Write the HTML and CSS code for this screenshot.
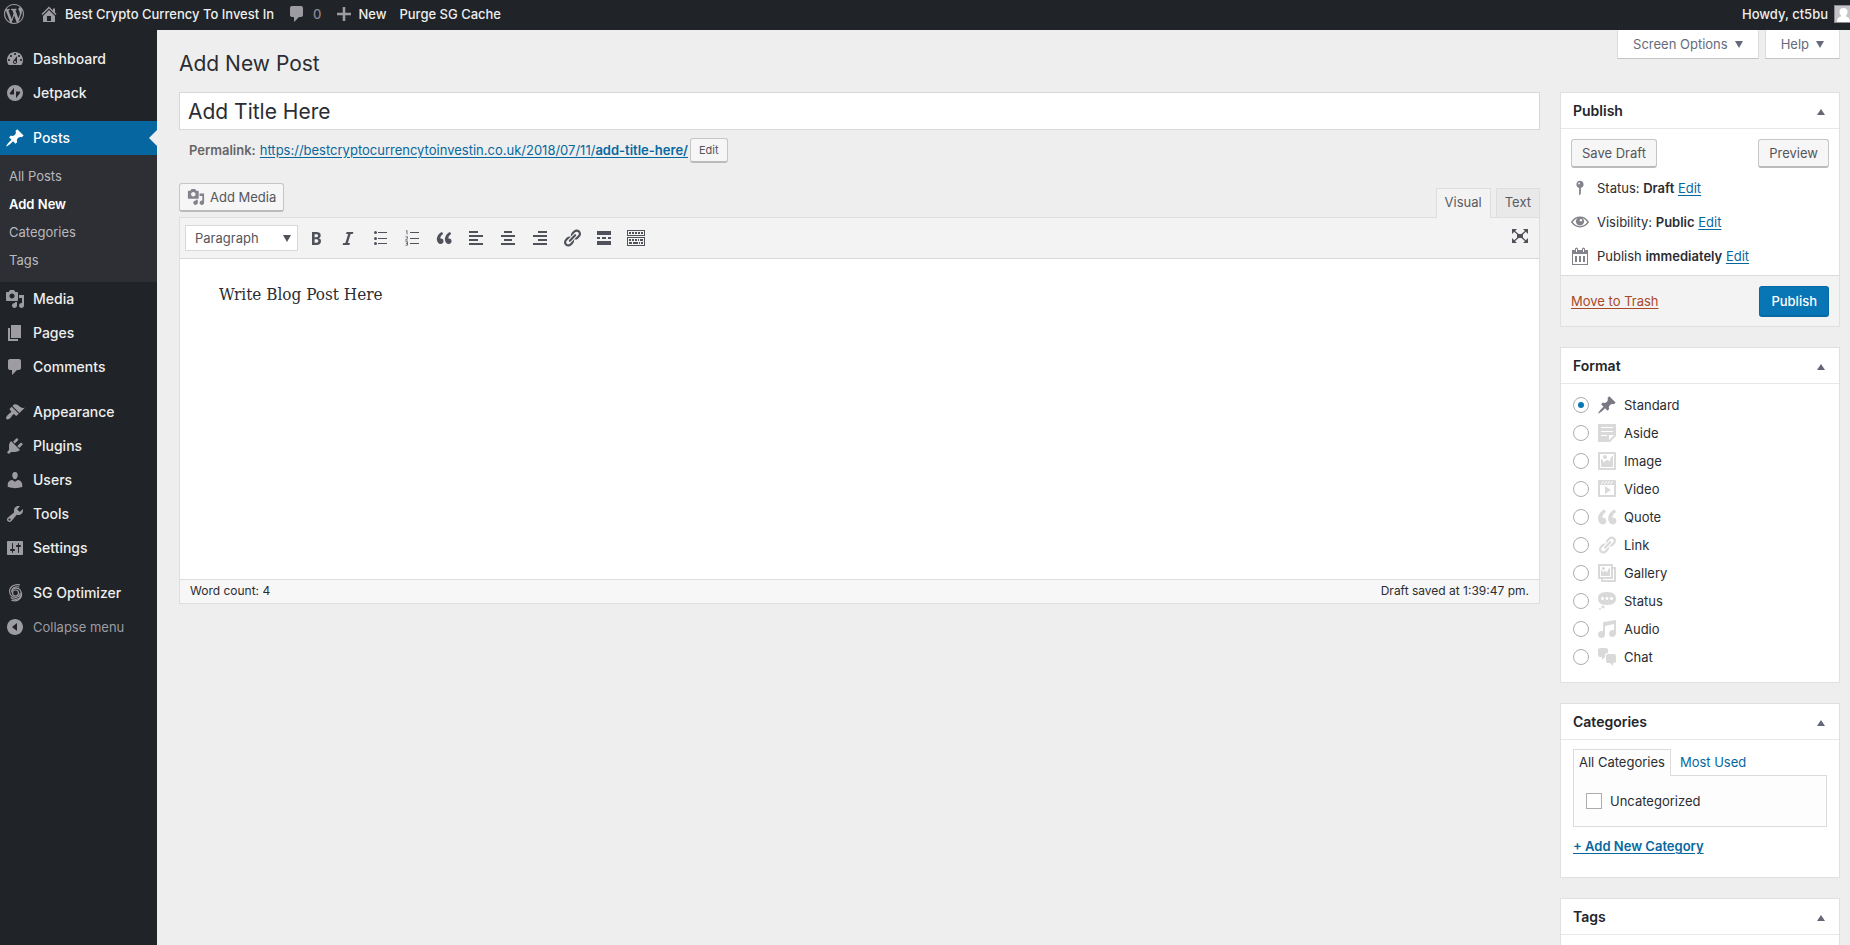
FILE: index.html
```html
<!DOCTYPE html>
<html lang="en">
<head>
<meta charset="utf-8">
<title>Add New Post</title>
<link rel="stylesheet" href="styles.css">
</head>
<body>
<svg class="sprite" aria-hidden="true">
<symbol id="i-wp" viewBox="0 0 20 20"><path d="M20 10c0-5.51-4.49-10-10-10C4.48 0 0 4.49 0 10c0 5.52 4.48 10 10 10 5.51 0 10-4.48 10-10zM7.78 15.37L4.37 6.22c.55-.02 1.17-.08 1.17-.08.5-.06.44-1.13-.06-1.11 0 0-1.45.11-2.37.11-.18 0-.37 0-.58-.01C4.12 2.69 6.87 1.11 10 1.11c2.33 0 4.45.87 6.05 2.34-.68-.11-1.65.39-1.65 1.58 0 .74.45 1.36.9 2.1.35.61.55 1.36.55 2.46 0 1.49-1.4 5-1.4 5l-3.03-8.37c.54-.02.82-.17.82-.17.5-.05.44-1.25-.06-1.22 0 0-1.44.12-2.38.12-.87 0-2.33-.12-2.33-.12-.5-.03-.56 1.2-.06 1.22l.92.08 1.26 3.41zM17.41 10c.24-.64.74-1.87.43-4.25.7 1.29 1.05 2.71 1.05 4.25 0 3.29-1.73 6.24-4.4 7.78.97-2.59 1.94-5.2 2.92-7.78zM6.1 18.09C3.12 16.65 1.11 13.53 1.11 10c0-1.3.23-2.48.72-3.59C3.25 10.3 4.67 14.2 6.1 18.09zm4.03-6.63l2.58 6.98c-.86.29-1.76.45-2.71.45-.79 0-1.57-.11-2.29-.33.81-2.38 1.62-4.74 2.42-7.1z"/></symbol>
<symbol id="i-home" viewBox="0 0 20 20"><path fill-rule="evenodd" d="M16 8.5l1.53 1.53-1.06 1.06L10 4.6l-6.47 6.49-1.06-1.06L10 2.5l4 4v-2h2v4zm-6-2.46l6 5.99V18H4v-5.97zM12 17v-5H8v5h4z"/></symbol>
<symbol id="i-plus" viewBox="0 0 20 20"><path d="M17 8.7v2.6h-5.7V17H8.7v-5.7H3V8.7h5.7V3h2.6v5.7z"/></symbol>
<symbol id="i-dash" viewBox="0 0 20 20"><path fill-rule="evenodd" d="M3.76 16h12.48c1.1-1.37 1.76-3.11 1.76-5 0-4.42-3.58-8-8-8s-8 3.58-8 8c0 1.89.66 3.63 1.76 5zM10 4c.55 0 1 .45 1 1s-.45 1-1 1-1-.45-1-1 .45-1 1-1zM6 6c.55 0 1 .45 1 1s-.45 1-1 1-1-.45-1-1 .45-1 1-1zm8 0c.55 0 1 .45 1 1s-.45 1-1 1-1-.45-1-1 .45-1 1-1zm-5.37 5.55L12 7v6c0 1.1-.9 2-2 2s-2-.9-2-2c0-.57.24-1.08.63-1.45zM4 10c.55 0 1 .45 1 1s-.45 1-1 1-1-.45-1-1 .45-1 1-1zm12 0c.55 0 1 .45 1 1s-.45 1-1 1-1-.45-1-1 .45-1 1-1zm-5 3c0-.55-.45-1-1-1s-1 .45-1 1 .45 1 1 1 1-.45 1-1z"/></symbol>
<symbol id="i-jet" viewBox="0 0 20 20"><path fill-rule="evenodd" d="M10 2a8 8 0 1 0 0 16 8 8 0 0 0 0-16zM9 11.6H5.6c-.9-.3-1-1-.7-1.500L9 4.800zM11 15.200V8.400h3.400c.9.3 1 1 .7 1.500z"/></symbol>
<symbol id="i-pin" viewBox="0 0 20 20"><path d="M10.44 3.02l1.82-1.82 6.36 6.35-1.83 1.82c-1.05-.68-2.48-.57-3.41.36l-.75.75c-.92.93-1.04 2.35-.35 3.41l-1.83 1.82-2.41-2.41-2.8 2.79c-.42.42-3.38 2.71-3.8 2.29s1.86-3.39 2.28-3.81l2.79-2.79L4.1 9.36l1.83-1.82c1.05.69 2.48.57 3.4-.36l.75-.75c.93-.92 1.05-2.35.36-3.41z"/></symbol>
<symbol id="i-media" viewBox="0 0 20 20"><path fill-rule="evenodd" d="M13 11V4c0-.55-.45-1-1-1h-1.670L9 1H5L3.670 3H2c-.55 0-1 .45-1 1v7c0 .55.45 1 1 1h10c.55 0 1-.45 1-1zM7 4.500c1.380 0 2.500 1.120 2.500 2.500S8.380 9.500 7 9.500 4.500 8.380 4.500 7 5.620 4.500 7 4.500zM14 6h5v10.500c0 1.380-1.120 2.500-2.500 2.500S14 17.880 14 16.500s1.120-2.500 2.500-2.500c.17 0 .34.02.5.05V9h-3V6zm-4 8.050V13h2v3.500c0 1.380-1.120 2.500-2.500 2.500S7 17.880 7 16.500 8.120 14 9.500 14c.17 0 .34.02.5.05z"/></symbol>
<symbol id="i-page" viewBox="0 0 20 20"><path d="M6 15V2h10v13H6zm-1 1h8v2H3V5h2v11z"/></symbol>
<symbol id="i-comment" viewBox="0 0 20 20"><path d="M5 2h9c1.100 0 2 .9 2 2v7c0 1.100-.9 2-2 2h-2l-5 5v-5H5c-1.100 0-2-.9-2-2V4c0-1.100.9-2 2-2z"/></symbol>
<symbol id="i-brush" viewBox="0 0 20 20"><path d="M14.480 11.060L7.410 3.990l1.500-1.500c.5-.56 2.300-.47 3.510.32 1.210.8 1.430 1.280 2.910 2.100 1.180.64 2.450 1.260 4.450.85zm-.71.71L6.700 4.700 4.930 6.470c-.39.39-.39 1.020 0 1.410l1.060 1.060c.39.39.39 1.030 0 1.420-.6.6-1.430 1.110-2.210 1.690-.35.26-.7.53-1.010.84C1.430 14.230.4 16.080 1.400 17.070c.99 1 2.840-.03 4.180-1.360.31-.31.58-.66.85-1.020.57-.78 1.080-1.610 1.690-2.210.39-.39 1.020-.39 1.410 0l1.060 1.060c.39.39 1.020.39 1.410 0z"/></symbol>
<symbol id="i-plug" viewBox="0 0 20 20"><path d="M13.110 4.360L9.870 7.600 8 5.730l3.240-3.240c.35-.34 1.050-.2 1.560.32.52.51.66 1.210.31 1.550zm-8 1.770l.91-1.120 9.010 9.010-1.190.84c-.71.71-2.630 1.160-3.820 1.160H6.140L4.900 17.260c-.59.59-1.540.59-2.120 0-.59-.58-.59-1.530 0-2.120l1.240-1.240v-3.880c0-1.130.4-3.190 1.090-3.890zm7.260 3.970l3.240-3.240c.34-.35 1.040-.21 1.550.31.52.51.66 1.210.31 1.550l-3.240 3.250z"/></symbol>
<symbol id="i-user" viewBox="0 0 20 20"><path d="M10 9.250c-2.270 0-2.730-3.440-2.730-3.440C7 4.020 7.820 2 9.970 2c2.160 0 2.980 2.020 2.710 3.810 0 0-.41 3.440-2.680 3.440zm0 2.570L12.720 10c2.390 0 4.520 2.330 4.520 4.530v2.490s-3.650 1.130-7.240 1.130c-3.650 0-7.240-1.130-7.240-1.130v-2.490c0-2.250 1.940-4.480 4.470-4.480z"/></symbol>
<symbol id="i-tool" viewBox="0 0 20 20"><path fill-rule="evenodd" d="M16.680 9.770c-1.340 1.340-3.300 1.670-4.950.99l-5.410 6.520c-.99.99-2.590.99-3.580 0s-.99-2.590 0-3.570l6.520-5.420c-.68-1.650-.35-3.610.99-4.950 1.280-1.280 3.120-1.620 4.720-1.060l-2.890 2.890 2.820 2.820 2.860-2.870c.53 1.580.18 3.390-1.080 4.650zM3.810 16.210c.4.39 1.040.39 1.430 0 .4-.4.4-1.040 0-1.430-.39-.4-1.030-.4-1.430 0-.39.39-.39 1.030 0 1.430z"/></symbol>
<symbol id="i-set" viewBox="0 0 20 20"><path fill-rule="evenodd" d="M18 16V4c0-.55-.45-1-1-1H3c-.55 0-1 .45-1 1v12c0 .55.45 1 1 1h14c.55 0 1-.45 1-1zM8 11h1c.55 0 1 .45 1 1s-.45 1-1 1H8v1.500c0 .28-.22.5-.5.5s-.5-.22-.5-.5V13H6c-.55 0-1-.45-1-1s.45-1 1-1h1V5.500c0-.28.22-.5.5-.5s.5.22.5.5V11zm5-2h-1c-.55 0-1-.45-1-1s.45-1 1-1h1V5.500c0-.28.22-.5.5-.5s.5.22.5.5V7h1c.55 0 1 .45 1 1s-.45 1-1 1h-1v5.500c0 .28-.22.5-.5.5s-.5-.22-.5-.5V9z"/></symbol>
<symbol id="i-sg" viewBox="0 0 20 20"><g fill="none" stroke="currentColor" stroke-width="1.200" stroke-linecap="round"><circle cx="10.500" cy="10" r="3"/><path d="M14.500 1.800C9 .8 4.500 4 4.600 8.500c.1 3.500 2.600 6 6 5.900 3-.1 4.600-2 4.700-4.400"/><path d="M13.800 4C9.500 2.900 6.700 5.500 6.700 9"/><path d="M6.800 7.300c2-3 6.500-2.800 8.400-.3 2.500 3.500.8 8.500-3.400 9.200-2.300.4-4.300-.2-5.800-1.400"/><path d="M16.600 11.500c-.2 4.500-4.600 7.500-9.800 5.800"/></g></symbol>
<symbol id="i-collapse" viewBox="0 0 20 20"><path fill-rule="evenodd" d="M10 2c4.420 0 8 3.580 8 8s-3.580 8-8 8-8-3.580-8-8 3.580-8 8-8zm2 12V6l-5 4z"/></symbol>
<symbol id="i-aside" viewBox="0 0 20 20"><path fill-rule="evenodd" d="M1 1h18v12l-6 6H1V1zm3 3v1h12V4H4zm0 4v1h12V8H4zm6 5v-1H4v1h6zm2 4l5-5h-5v5z"/></symbol>
<symbol id="i-image" viewBox="0 0 20 20"><path fill-rule="evenodd" d="M2.250 1h15.500c.69 0 1.250.56 1.250 1.250v15.500c0 .69-.56 1.250-1.250 1.250H2.250C1.560 19 1 18.440 1 17.750V2.250C1 1.560 1.560 1 2.250 1zM17 17V3H3v14h14zM10 6c0-1.100-.9-2-2-2s-2 .9-2 2 .9 2 2 2 2-.9 2-2zm3 5s0-6 3-6v10c0 .55-.45 1-1 1H5c-.55 0-1-.45-1-1V8c2 0 3 4 3 4s1-3 3-3 3 2 3 2z"/></symbol>
<symbol id="i-video" viewBox="0 0 20 20"><path fill-rule="evenodd" d="M2 1h16c.55 0 1 .45 1 1v16H1V2c0-.55.45-1 1-1zm4 1L4 5h1l2-3H6zm3 0L7 5h1l2-3H9zm3 0l-2 3h1l2-3h-1zm3 0l-2 3h1l2-3h-1zm2 14V6H3v10h14zM8 7l6 4-6 4V7z"/></symbol>
<symbol id="i-quote" viewBox="0 0 20 20"><path d="M9.490 13.220c0-.74-.2-1.380-.61-1.900-.62-.78-1.830-.88-2.530-.72-.29-1.650 1.110-3.750 2.920-4.650L7.880 4c-2.730 1.300-5.420 4.280-4.960 8.050C3.210 14.430 4.590 16 6.540 16c.85 0 1.560-.25 2.120-.75s.83-1.180.83-2.030zm8.050 0c0-.74-.2-1.380-.61-1.900-.63-.78-1.830-.88-2.530-.72-.29-1.650 1.110-3.750 2.920-4.650L15.930 4c-2.730 1.300-5.410 4.280-4.950 8.050.29 2.380 1.660 3.950 3.610 3.950.85 0 1.560-.25 2.120-.75s.83-1.180.83-2.030z"/></symbol>
<symbol id="i-bigquote" viewBox="2 3 16 14"><use href="#i-quote" width="20" height="20"/></symbol>
<symbol id="i-link" viewBox="0 0 20 20"><path fill-rule="evenodd" d="M17.740 2.760c1.680 1.690 1.680 4.410 0 6.100l-1.530 1.520c-1.120 1.120-2.700 1.470-4.140 1.090l2.620-2.610.76-.77.76-.76c.84-.84.84-2.200 0-3.040-.84-.85-2.200-.85-3.040 0l-.77.76-3.380 3.380c-.37-1.440-.02-3.020 1.100-4.140l1.520-1.530c1.690-1.680 4.420-1.680 6.100 0zM8.590 13.430l5.340-5.340c.42-.42.42-1.100 0-1.520-.44-.43-1.130-.39-1.530 0l-5.330 5.340c-.42.42-.42 1.100 0 1.520.44.43 1.130.39 1.520 0zm-.76 2.290l4.140-4.150c.38 1.440.03 3.020-1.090 4.140l-1.520 1.530c-1.690 1.680-4.410 1.680-6.100 0-1.680-1.680-1.680-4.420 0-6.100l1.530-1.520c1.120-1.120 2.700-1.470 4.140-1.100l-4.140 4.150c-.85.84-.85 2.200 0 3.050.84.84 2.200.84 3.040 0z"/></symbol>
<symbol id="i-gallery" viewBox="0 0 20 20"><path fill-rule="evenodd" d="M16 4h1.960c.57 0 1.040.47 1.040 1.040v12.920c0 .57-.47 1.040-1.040 1.040H5.040C4.470 19 4 18.530 4 17.960V16H2.040C1.470 16 1 15.530 1 14.960V2.040C1 1.470 1.470 1 2.040 1h12.920c.57 0 1.040.47 1.040 1.040V4zM3 14h11V3H3v11zm5-8.500C8 4.670 7.330 4 6.500 4S5 4.670 5 5.500 5.670 7 6.500 7 8 6.330 8 5.500zm2 4.500s1-5 3-5v8H4V7c2 0 2 3 2 3s.33-2 2-2 2 2 2 2zm7 7V6h-1v8.960c0 .57-.47 1.040-1.040 1.040H6v1h11z"/></symbol>
<symbol id="i-status" viewBox="0 0 20 20"><path fill-rule="evenodd" d="M10 1c7 0 9 2.910 9 6.500S17 14 10 14s-9-2.910-9-6.500S3 1 10 1zM5.500 9C6.330 9 7 8.330 7 7.500S6.330 6 5.500 6 4 6.670 4 7.500 4.670 9 5.500 9zM10 9c.83 0 1.500-.67 1.500-1.500S10.830 6 10 6s-1.500.67-1.500 1.500S9.170 9 10 9zm4.500 0c.83 0 1.500-.67 1.500-1.500S15.330 6 14.500 6 13 6.670 13 7.500 13.670 9 14.500 9z"/><circle cx="6" cy="16" r="1.500"/><circle cx="3" cy="18" r="1"/></symbol>
<symbol id="i-audio" viewBox="0 0 20 20"><path d="M6.990 3.080l11.020-2c.55-.08.99.45.99 1V14.500c0 1.940-1.570 3.500-3.500 3.500S12 16.440 12 14.500c0-1.930 1.570-3.500 3.500-3.500.54 0 1.040.14 1.500.35V5.080l-9 2V16c-.24 1.700-1.740 3-3.500 3C2.570 19 1 17.440 1 15.500 1 13.570 2.570 12 4.500 12c.54 0 1.040.14 1.500.35V4.080c0-.55.44-.91.99-1z"/></symbol>
<symbol id="i-chat" viewBox="0 0 20 20"><path d="M11 6h-.82C9.070 6 8 7.200 8 8.160V10l-3 3v-3H3c-1.100 0-2-.9-2-2V3c0-1.100.9-2 2-2h6c1.100 0 2 .9 2 2v3zm0 1h6c1.100 0 2 .9 2 2v5c0 1.100-.9 2-2 2h-1v3l-3-3h-2c-1.100 0-2-.9-2-2V9c0-1.100.9-2 2-2z"/></symbol>
<symbol id="i-poststatus" viewBox="0 0 20 20"><path fill-rule="evenodd" d="M14 6c0 1.860-1.280 3.410-3 3.860V16c0 1-2 2-2 2V9.860c-1.720-.45-3-2-3-3.860 0-2.210 1.790-4 4-4s4 1.790 4 4zM8 5c0 .55.45 1 1 1s1-.45 1-1-.45-1-1-1-1 .45-1 1z"/></symbol>
<symbol id="i-eye" viewBox="0 0 20 20"><path fill-rule="evenodd" d="M19.700 9.400C17.700 6 14 3.900 10 3.900S2.300 6 .3 9.400L0 10l.3.6c2 3.400 5.700 5.500 9.700 5.500s7.700-2.100 9.700-5.500l.3-.6-.3-.6zM10 14.600c-3.300 0-6.300-1.800-8-4.600 1.300-2 3.200-3.500 5.400-4.200C6.200 6.600 5.400 8 5.400 9.500c0 2.500 2.100 4.500 4.600 4.500s4.600-2 4.600-4.500c0-1.500-.8-2.900-2-3.700 2.200.7 4.100 2.200 5.400 4.200-1.700 2.800-4.700 4.600-8 4.600z"/><circle cx="11" cy="8" r="1.300" fill="#fff"/></symbol>
<symbol id="i-cal" viewBox="0 0 18 18"><path fill-rule="evenodd" d="M1 3h3V2a1.500 1.500 0 0 1 3 0v1h4V2a1.500 1.500 0 0 1 3 0v1h3v15H1zM5 2v3h1V2zm7 0v3h1V2zM2 7v10h14V7z"/><path d="M4 9h2v6H4zM8 9h2v6H8zM12 9h2v6h-2z"/></symbol>
<symbol id="i-bold" viewBox="0 0 20 20"><path fill-rule="evenodd" d="M6 4v13h4.540c1.370 0 2.460-.33 3.260-1 .8-.66 1.200-1.580 1.200-2.770 0-.84-.17-1.510-.51-2.010s-.9-.85-1.670-1.030v-.09c.57-.1 1.020-.4 1.360-.9s.51-1.130.51-1.910c0-1.140-.39-1.980-1.170-2.500C12.750 4.260 11.500 4 9.780 4H6zm2.570 5.150V6.260h1.360c.73 0 1.270.11 1.610.32.34.22.51.58.51 1.070 0 .54-.16.92-.47 1.150s-.82.35-1.510.35h-1.500zm0 2.190h1.600c1.440 0 2.160.53 2.160 1.610 0 .6-.17 1.050-.51 1.340s-.86.43-1.570.43H8.570v-3.380z"/></symbol>
<symbol id="i-italic" viewBox="0 0 20 20"><path d="M14.780 6h-2.130l-2.800 9h2.120l-.62 2H4.600l.62-2h2.140l2.800-9H8.030l.62-2h6.750z"/></symbol>
<symbol id="i-ul" viewBox="0 0 20 20"><path d="M8 4h9v1H8zM8 10h9v1H8zM8 15h9v1H8z"/><circle cx="5.500" cy="4.500" r="1.500"/><circle cx="5.500" cy="10.500" r="1.500"/><circle cx="5.500" cy="15.500" r="1.500"/></symbol>
<symbol id="i-ol" viewBox="0 0 20 20"><path d="M8 4h9v1H8zM8 10h9v1H8zM8 15h9v1H8z"/><path fill="none" stroke="currentColor" stroke-width=".8" d="M4 3.200l1-.7v4M3.500 8.800h2v1.500l-2 1.700h2.300M3.500 13.700h2v3.500h-2M4 15.400h1.500"/></symbol>
<symbol id="i-left" viewBox="0 0 20 20"><path d="M3 3h9v2H3zM3 7h14v2H3zM3 11h9v2H3zM3 15h14v2H3z"/></symbol>
<symbol id="i-alignc" viewBox="0 0 20 20"><path d="M6 3h8v2H6zM3 7h14v2H3zM6 11h8v2H6zM3 15h14v2H3z"/></symbol>
<symbol id="i-alignr" viewBox="0 0 20 20"><path d="M8 3h9v2H8zM3 7h14v2H3zM8 11h9v2H8zM3 15h14v2H3z"/></symbol>
<symbol id="i-more" viewBox="0 0 20 20"><path d="M3 3h14v4H3zM3 9h3v2H3zM8 9h4v2H8zM14 9h3v2h-3zM3 13h14v4H3z"/></symbol>
<symbol id="i-kitchen" viewBox="0 0 20 20"><path fill-rule="evenodd" d="M1 2h18v6H1zM2 3v4h16V3zM1 9h18v9H1zM2 10v7h16v-7z"/><path d="M3 4h2v2H3zM6 4h2v2H6zM9 4h2v2H9zM12 4h2v2h-2zM15 4h2v2h-2zM3 11h2v2H3zM6 11h2v2H6zM9 11h2v2H9zM12 11h1v2h-1zM14 11h3v2h-3zM3 14h3v2H3zM7 14h5v2H7zM13 14h1v2h-1zM15 14h2v2h-2z"/></symbol>
<symbol id="i-full" viewBox="0 0 20 20"><path d="M7 8h6v4H7zM2 3h5L2 8zM18 3h-5l5 5zM2 17h5l-5-5zM18 17h-5l5-5z"/><path fill="none" stroke="currentColor" stroke-width="1.200" d="M3 4l14 12M17 4L3 16"/></symbol>
<symbol id="i-down" viewBox="0 0 8 7"><path d="M0 0h8L4 7z"/></symbol>
<symbol id="i-up" viewBox="0 0 8 6"><path d="M0 6h8L4 0z"/></symbol>
</svg>

<header class="bar">
  <nav class="bar-group" aria-label="Toolbar">
    <a href="#" class="bar-item logo" aria-label="About WordPress"><svg class="ico"><use href="#i-wp"/></svg></a>
    <a href="#" class="bar-item site"><svg class="ico"><use href="#i-home"/></svg>Best Crypto Currency To Invest In</a>
    <a href="#" class="bar-item notes"><svg class="ico"><use href="#i-comment"/></svg><span class="count">0</span></a>
    <a href="#" class="bar-item new"><svg class="ico"><use href="#i-plus"/></svg>New</a>
    <a href="#" class="bar-item">Purge SG Cache</a>
  </nav>
  <a href="#" class="bar-item account">Howdy, ct5bu<svg class="avatar" viewBox="0 0 18 18"><path fill="#8d8a92" d="M0 0h18v18H0z"/><path fill="#c4c4c6" d="M1 1h17v16H1z"/><circle cx="9.500" cy="7" r="4" fill="#fff"/><path fill="#fff" d="M3 17c0-4 2-5 4-5.500V9h5v2.500c2 .5 4 1.500 4 5.500z"/></svg></a>
</header>

<div class="shell">
  <nav class="menu" aria-label="Main menu">
    <a href="#" class="item"><svg class="ico"><use href="#i-dash"/></svg>Dashboard</a>
    <a href="#" class="item"><svg class="ico"><use href="#i-jet"/></svg>Jetpack</a>
    <a href="#" class="item current gap"><svg class="ico"><use href="#i-pin"/></svg>Posts</a>
    <div class="sub">
      <a href="#">All Posts</a>
      <a href="#" class="on">Add New</a>
      <a href="#">Categories</a>
      <a href="#">Tags</a>
    </div>
    <a href="#" class="item"><svg class="ico"><use href="#i-media"/></svg>Media</a>
    <a href="#" class="item"><svg class="ico"><use href="#i-page"/></svg>Pages</a>
    <a href="#" class="item"><svg class="ico"><use href="#i-comment"/></svg>Comments</a>
    <a href="#" class="item gap"><svg class="ico"><use href="#i-brush"/></svg>Appearance</a>
    <a href="#" class="item"><svg class="ico"><use href="#i-plug"/></svg>Plugins</a>
    <a href="#" class="item"><svg class="ico"><use href="#i-user"/></svg>Users</a>
    <a href="#" class="item"><svg class="ico"><use href="#i-tool"/></svg>Tools</a>
    <a href="#" class="item"><svg class="ico"><use href="#i-set"/></svg>Settings</a>
    <a href="#" class="item gap"><svg class="ico"><use href="#i-sg"/></svg>SG Optimizer</a>
    <button type="button" class="item fold"><svg class="ico"><use href="#i-collapse"/></svg>Collapse menu</button>
  </nav>

  <main class="main">
    <div class="head">
      <h1>Add New Post</h1>
      <div class="meta">
        <button type="button" class="meta-btn">Screen Options<svg class="tri-down"><use href="#i-down"/></svg></button>
        <button type="button" class="meta-btn">Help<svg class="tri-down"><use href="#i-down"/></svg></button>
      </div>
    </div>

    <div class="columns">
      <section class="content">
        <input class="title" type="text" value="Add Title Here" aria-label="Title">
        <div class="permalink"><strong>Permalink:</strong> <a href="#">https://bestcryptocurrencytoinvestin.co.uk/2018/07/11/<b>add-title-here/</b></a><button type="button" class="btn small">Edit</button></div>
        <div class="tools">
          <button type="button" class="btn media"><svg class="ico"><use href="#i-media"/></svg>Add Media</button>
          <div class="tabs">
            <button type="button" class="tab active">Visual</button>
            <button type="button" class="tab">Text</button>
          </div>
        </div>
        <div class="editor">
          <div class="toolbar">
            <div class="pick">
              <select aria-label="Text style"><option>Paragraph</option></select>
              <svg class="tri-down"><use href="#i-down"/></svg>
            </div>
            <button type="button" aria-label="Bold"><svg class="ico"><use href="#i-bold"/></svg></button>
            <button type="button" aria-label="Italic"><svg class="ico"><use href="#i-italic"/></svg></button>
            <button type="button" aria-label="Bulleted list"><svg class="ico"><use href="#i-ul"/></svg></button>
            <button type="button" aria-label="Numbered list"><svg class="ico"><use href="#i-ol"/></svg></button>
            <button type="button" aria-label="Blockquote"><svg class="ico"><use href="#i-quote"/></svg></button>
            <button type="button" aria-label="Align left"><svg class="ico"><use href="#i-left"/></svg></button>
            <button type="button" aria-label="Align centre"><svg class="ico"><use href="#i-alignc"/></svg></button>
            <button type="button" aria-label="Align right"><svg class="ico"><use href="#i-alignr"/></svg></button>
            <button type="button" aria-label="Insert link"><svg class="ico"><use href="#i-link"/></svg></button>
            <button type="button" aria-label="Read more"><svg class="ico"><use href="#i-more"/></svg></button>
            <button type="button" aria-label="Toolbar toggle"><svg class="ico"><use href="#i-kitchen"/></svg></button>
            <button type="button" class="full" aria-label="Distraction-free writing"><svg class="ico"><use href="#i-full"/></svg></button>
          </div>
          <div class="page" contenteditable="true" role="textbox" aria-label="Post body"><p>Write Blog Post Here</p></div>
          <div class="status"><span>Word count: 4</span><span>Draft saved at 1:39:47 pm.</span></div>
        </div>
      </section>

      <aside class="side">
        <section class="box">
          <h2>Publish<svg class="tri-up"><use href="#i-up"/></svg></h2>
          <div class="publish">
            <div class="pair"><button type="button" class="btn">Save Draft</button><button type="button" class="btn">Preview</button></div>
            <p><svg class="ico"><use href="#i-poststatus"/></svg><span>Status: <b>Draft</b> <a href="#">Edit</a></span></p>
            <p><svg class="ico"><use href="#i-eye"/></svg><span>Visibility: <b>Public</b> <a href="#">Edit</a></span></p>
            <p><svg class="ico"><use href="#i-cal"/></svg><span>Publish <b>immediately</b> <a href="#">Edit</a></span></p>
          </div>
          <div class="actions"><a href="#" class="trash">Move to Trash</a><button type="submit" class="btn primary">Publish</button></div>
        </section>

        <section class="box">
          <h2>Format<svg class="tri-up"><use href="#i-up"/></svg></h2>
          <div class="formats">
            <label class="dark"><input type="radio" name="format" checked><svg class="ico"><use href="#i-pin"/></svg>Standard</label>
            <label><input type="radio" name="format"><svg class="ico"><use href="#i-aside"/></svg>Aside</label>
            <label><input type="radio" name="format"><svg class="ico"><use href="#i-image"/></svg>Image</label>
            <label><input type="radio" name="format"><svg class="ico"><use href="#i-video"/></svg>Video</label>
            <label><input type="radio" name="format"><svg class="ico"><use href="#i-bigquote"/></svg>Quote</label>
            <label><input type="radio" name="format"><svg class="ico"><use href="#i-link"/></svg>Link</label>
            <label><input type="radio" name="format"><svg class="ico"><use href="#i-gallery"/></svg>Gallery</label>
            <label><input type="radio" name="format"><svg class="ico"><use href="#i-status"/></svg>Status</label>
            <label><input type="radio" name="format"><svg class="ico"><use href="#i-audio"/></svg>Audio</label>
            <label><input type="radio" name="format"><svg class="ico"><use href="#i-chat"/></svg>Chat</label>
          </div>
        </section>

        <section class="box">
          <h2>Categories<svg class="tri-up"><use href="#i-up"/></svg></h2>
          <div class="cats">
            <div class="cat-tabs"><a href="#" class="on">All Categories</a><a href="#">Most Used</a></div>
            <div class="cat-list"><label><input type="checkbox">Uncategorized</label></div>
            <a href="#" class="add">+ Add New Category</a>
          </div>
        </section>

        <section class="box">
          <h2>Tags<svg class="tri-up"><use href="#i-up"/></svg></h2>
          <div class="tags-body"></div>
        </section>
      </aside>
    </div>
  </main>
</div>
</body>
</html>
```
FILE: styles.css
```css
* { box-sizing: border-box; }
body {
  margin: 0;
  height: 100vh;
  overflow: hidden;
  display: flex;
  flex-direction: column;
  background: #eee;
  color: #2b2d33;
  font: 13px/20px Inter, "Liberation Sans", sans-serif;
}
button, input, select { font: inherit; color: inherit; margin: 0; }
button { cursor: pointer; }
a { color: #0768a0; text-underline-offset: 2px; }
.sprite { position: absolute; width: 0; height: 0; }
.ico { width: 20px; height: 20px; flex: none; fill: currentColor; }
.tri-down { width: 8px; height: 7px; fill: currentColor; }
.tri-up { width: 8px; height: 6px; margin-top: 2px; fill: #646775; }

/* Admin bar */
.bar {
  flex: none;
  display: flex;
  justify-content: space-between;
  height: 30px;
  background: #202327;
  overflow: hidden;
}
.bar-group { display: flex; gap: 13px; padding-left: 4px; }
.bar-item {
  display: flex;
  align-items: center;
  height: 28px;
  color: #eee;
  font-weight: 500;
  text-decoration: none;
  white-space: nowrap;
}
.bar-item .ico { color: #9d9ca3; }
.logo { margin-right: 2px; }
.site .ico, .notes .ico { margin-right: 6px; }
.new .ico { margin-right: 4px; }
.count { color: #8a8790; }
.account { margin-right: -2px; gap: 6px; }
.avatar { width: 18px; height: 18px; }

/* Side menu */
.shell { flex: 1; min-height: 0; display: flex; overflow: hidden; }
.menu { flex: none; width: 157px; padding-top: 12px; background: #202327; }
.item {
  position: relative;
  display: flex;
  align-items: center;
  gap: 8px;
  width: 100%;
  height: 34px;
  padding: 0 0 0 5px;
  border: 0;
  background: none;
  color: #eee;
  font-size: 14px;
  font-weight: 500;
  text-decoration: none;
}
.item .ico { color: #9d9ca3; }
.gap { margin-top: 11px; }
.current, .current .ico { color: #fff; }
.current { background: #0666a0; }
.current::after {
  content: "";
  position: absolute;
  right: 0;
  top: 9px;
  border: 8px solid transparent;
  border-left: 0;
  border-right-color: #eee;
}
.sub { padding: 7px 0 8px 9px; background: #2d2f35; }
.sub a { display: block; line-height: 28px; color: #b9b9bd; text-decoration: none; }
.sub .on { color: #fff; font-weight: 600; }
.fold { color: #9d9ca3; font-size: 13px; font-weight: 400; }

/* Page head */
.main { flex: 1; min-width: 0; padding: 0 10px 0 22px; }
.head { display: flex; justify-content: space-between; align-items: flex-start; }
h1 { margin: 20px 0 14px; font-size: 21px; font-weight: 400; line-height: 28px; }
.meta { display: flex; gap: 6px; }
.meta-btn {
  display: flex;
  align-items: center;
  gap: 7px;
  height: 29px;
  padding: 0 15px;
  border: 1px solid #ddd;
  border-top: 0;
  border-bottom-color: #c4c4c4;
  background: #fff;
  color: #666b7b;
}
.columns { display: grid; grid-template-columns: minmax(0, 1fr) 280px; gap: 20px; align-items: start; }

/* Buttons */
.btn {
  height: 29px;
  padding: 0 10px;
  border: 1px solid #c6c6c8;
  border-bottom: 2px solid #bbb;
  border-radius: 3px;
  background: #f6f6f6;
  color: #55555c;
  line-height: 24px;
}
.small { height: 25px; padding: 0 8px; margin-left: 2px; font-size: 11px; line-height: 20px; }
.primary { height: 31px; padding: 0 11px; border-color: #0768a4; background: #0876b5; color: #fff; font-weight: 500; }

/* Editor column */
.title {
  display: block;
  width: 100%;
  height: 38px;
  padding: 0 8px;
  border: 1px solid #d8d8d8;
  background: #fff;
  font-size: 21px;
}
.permalink { display: flex; align-items: center; height: 40px; padding-left: 10px; color: #666; }
.permalink strong { margin-right: 4px; font-weight: 600; }
.permalink b { font-weight: 600; }
.tools { display: flex; justify-content: space-between; height: 47px; padding-top: 13px; }
.media { display: flex; align-items: center; gap: 5px; padding: 0 7px; }
.media .ico { width: 18px; height: 18px; color: #85828c; }
.tabs { display: flex; gap: 5px; align-self: flex-end; }
.tab {
  height: 29px;
  padding: 0 8px 2px;
  border: 1px solid #dedede;
  border-bottom: 0;
  background: #e9e9e9;
  color: #5a5b62;
}
.active { position: relative; margin-bottom: -1px; height: 30px; padding-bottom: 3px; background: #f3f3f3; }
.editor { border: 1px solid #dedede; background: #fff; }
.toolbar {
  display: flex;
  align-items: center;
  gap: 4px;
  height: 41px;
  padding: 0 5px;
  border-bottom: 1px solid #d8d8d8;
  background: #f3f3f3;
}
.pick { position: relative; }
.pick select {
  appearance: none;
  display: block;
  width: 113px;
  height: 26px;
  padding: 0 9px;
  border: 1px solid #d8d8d8;
  border-radius: 0;
  background: #fff;
  color: #55555c;
}
.pick .tri-down { position: absolute; right: 7px; top: 10px; color: #50525b; pointer-events: none; }
.toolbar button {
  display: flex;
  align-items: center;
  justify-content: center;
  width: 28px;
  height: 28px;
  padding: 0;
  border: 0;
  background: none;
  color: #50525b;
}
.toolbar .full { margin-left: auto; align-self: flex-start; margin-top: 4px; }
.page {
  height: 320px;
  padding: 20px 39px;
  color: #2b2d33;
  font: 17px/30px "DejaVu Serif Condensed", "DejaVu Serif", serif;
}
.page p { margin: 0; }
.status {
  display: flex;
  justify-content: space-between;
  align-items: center;
  height: 24px;
  padding: 0 10px 2px;
  border-top: 1px solid #dedede;
  background: #f7f7f7;
  font-size: 12px;
}

/* Boxes */
.side { display: grid; gap: 20px; }
.box { border: 1px solid #e0e0e0; background: #fff; }
.box h2 {
  display: flex;
  align-items: center;
  justify-content: space-between;
  height: 36px;
  margin: 0;
  padding: 0 14px 0 12px;
  border-bottom: 1px solid #e8e8e8;
  color: #23252b;
  font-size: 14px;
  font-weight: 600;
}
.publish { padding: 10px 10px 2px; }
.publish b { font-weight: 600; }
.pair { display: flex; justify-content: space-between; margin-bottom: 3px; }
.publish p { display: flex; align-items: center; gap: 8px; height: 34px; margin: 0; }
.publish .ico { width: 18px; height: 18px; color: #85828c; }
.actions {
  display: flex;
  justify-content: space-between;
  align-items: center;
  height: 51px;
  padding: 0 10px;
  border-top: 1px solid #dcdcdc;
  background: #f3f3f3;
}
.trash { color: #a8492a; }
.formats { padding: 7px 12px 11px; }
.formats label { display: flex; align-items: center; height: 28px; }
.formats .ico { margin: 0 7px 0 8px; color: #d9d9d9; }
.formats .dark .ico { color: #7a7884; }
input[type="radio"], input[type="checkbox"] {
  appearance: none;
  display: grid;
  place-items: center;
  flex: none;
  width: 16px;
  height: 16px;
  border: 1px solid #acacac;
  background: #fff;
}
input[type="radio"] { border-radius: 50%; }
input[type="radio"]:checked::before { content: ""; width: 6px; height: 6px; border-radius: 50%; background: #0876b5; }
.cats { padding: 9px 12px 21px; }
.cat-tabs { display: flex; }
.cat-tabs a { height: 26px; padding: 0 9px; line-height: 26px; text-decoration: none; }
.cat-tabs .on {
  position: relative;
  height: 27px;
  margin-bottom: -1px;
  padding: 0 5px;
  border: 1px solid #dcdcdc;
  border-bottom: 0;
  background: #fdfdfd;
  color: #2b2d33;
  line-height: 24px;
}
.cat-list { padding: 14px 12px; border: 1px solid #dcdcdc; background: #fdfdfd; }
.cat-list label { display: flex; align-items: center; gap: 8px; height: 22px; }
.add { display: block; width: fit-content; margin-top: 9px; font-weight: 600; }
.tags-body { height: 120px; }
```
